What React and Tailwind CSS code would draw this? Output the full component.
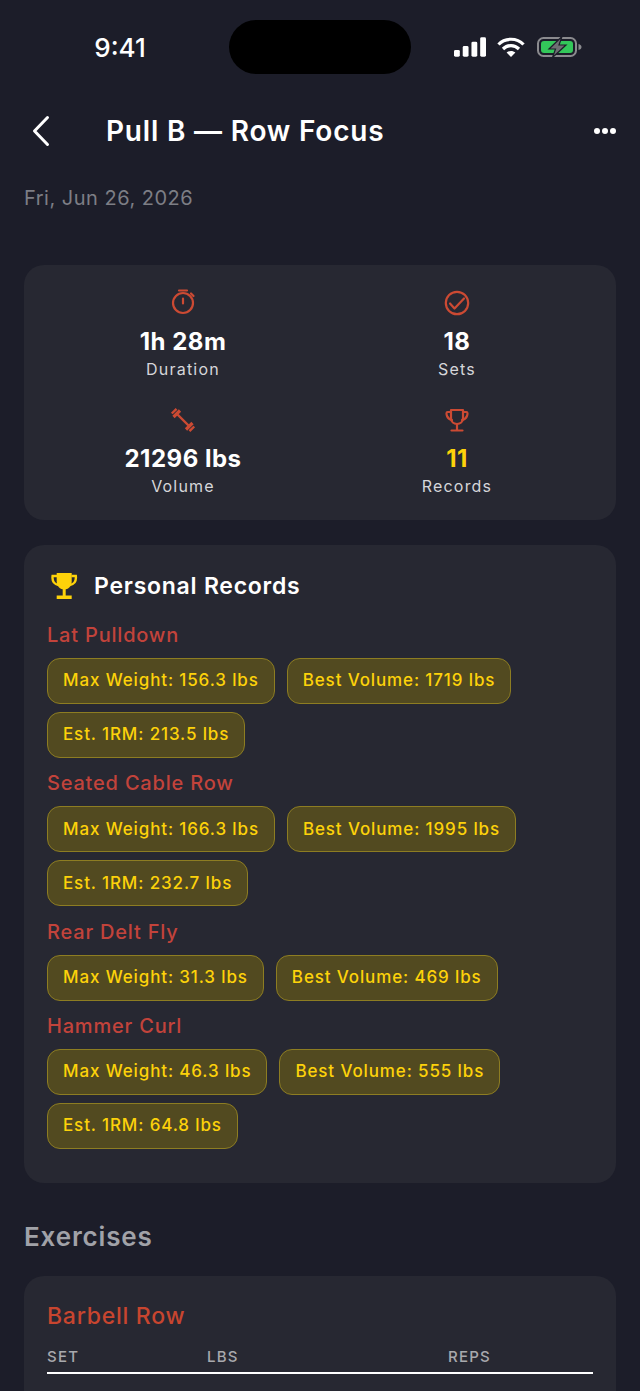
import React from 'react';

const summary = [
  { id: 'duration', icon: 'timer', value: '1h 28m', label: 'Duration' },
  { id: 'sets', icon: 'check', value: '18', label: 'Sets' },
  { id: 'volume', icon: 'barbell', value: '21296 lbs', label: 'Volume' },
  { id: 'records', icon: 'trophy', value: '11', label: 'Records', gold: true },
];

const records = [
  { name: 'Lat Pulldown', items: ['Max Weight: 156.3 lbs', 'Best Volume: 1719 lbs', 'Est. 1RM: 213.5 lbs'] },
  { name: 'Seated Cable Row', items: ['Max Weight: 166.3 lbs', 'Best Volume: 1995 lbs', 'Est. 1RM: 232.7 lbs'] },
  { name: 'Rear Delt Fly', items: ['Max Weight: 31.3 lbs', 'Best Volume: 469 lbs'] },
  { name: 'Hammer Curl', items: ['Max Weight: 46.3 lbs', 'Best Volume: 555 lbs', 'Est. 1RM: 64.8 lbs'] },
];

function SummaryIcon({ type }) {
  const common = { width: 30, height: 30, viewBox: '0 0 30 30', fill: 'none', stroke: '#cc4a33', strokeWidth: 2.2 };
  if (type === 'timer') {
    return (
      <svg {...common}>
        <circle cx="15" cy="15" r="10" />
        <path d="M11 2.5 H19 M15 10.5 V15.5 M23 5.5 L25.5 8" strokeLinecap="round" />
      </svg>
    );
  }
  if (type === 'check') {
    return (
      <svg {...common}>
        <circle cx="15" cy="15" r="11.2" />
        <path d="M8 15.5 L12.5 20.5 L22 10.5" strokeLinecap="round" strokeLinejoin="round" />
      </svg>
    );
  }
  if (type === 'barbell') {
    return (
      <svg {...common}>
        <path d="M9 9 L21 21" strokeWidth="2.4" />
        <path d="M5.5 12 L12 5.5 M18 24.5 L24.5 18" strokeWidth="3.2" />
        <path d="M3.8 8.5 L8.5 3.8 M21.5 26.2 L26.2 21.5" strokeWidth="2.4" />
      </svg>
    );
  }
  return (
    <svg {...common} strokeLinecap="round" strokeLinejoin="round">
      <path d="M9 5 H21 V13 C21 17 18 19 15 19 C12 19 9 17 9 13 Z" />
      <path d="M9 7 H5.5 C4.2 7 4.3 9 5 11 C6 13.5 8 14.5 10 15 M21 7 H24.5 C25.8 7 25.7 9 25 11 C24 13.5 22 14.5 20 15" />
      <path d="M15 19 V25.5 M9.5 25.5 H20.5" />
    </svg>
  );
}

function GoldTrophy() {
  return (
    <svg width="28" height="28" viewBox="0 0 28 28" fill="none">
      <path d="M6.7 1 H21.7 V9.5 C21.7 14 18.3 17.5 14.2 17.5 C10 17.5 6.7 14 6.7 9.5 Z" fill="#fdd20a" />
      <path d="M7 4 H2.6 C2 9 4 12.2 8.5 13 M21.4 4 H25.8 C26.4 9 24.4 12.2 19.9 13" stroke="#fdd20a" strokeWidth="2.4" />
      <path d="M12.7 17 H15.7 V24 H12.7 Z" fill="#fdd20a" />
      <path d="M6.7 23.5 H21.7 V27 H6.7 Z" fill="#fdd20a" />
    </svg>
  );
}

function StatusBar() {
  return (
    <div className="h-[94px] pt-5 flex items-start">
      <div className="w-[229px] h-[54px] flex items-center justify-center pl-[11px] text-[26px] font-medium text-white">9:41</div>
      <div className="w-[182px] h-[54px] rounded-[27px] bg-black" />
      <div className="flex-1 h-[54px] flex items-center pl-[43px] gap-[11px]">
        <svg width="32" height="20" viewBox="0 0 33 20" fill="white">
          <rect x="0" y="13" width="6" height="7" rx="1.5" />
          <rect x="9" y="9" width="6" height="11" rx="1.5" />
          <rect x="18" y="4.5" width="6" height="15.5" rx="1.5" />
          <rect x="27" y="0" width="6" height="20" rx="1.5" />
        </svg>
        <svg width="28" height="20" viewBox="0 0 28 20" fill="none" stroke="white" strokeWidth="3.2">
          <path d="M1.5 7.5 C8 0.5 20 0.5 26.5 7.5" />
          <path d="M6 12 C10.5 7.5 17.5 7.5 22 12" />
          <path d="M14 20 L9.6 15.6 C12 13.4 16 13.4 18.4 15.6 Z" fill="white" stroke="none" />
        </svg>
        <svg width="45" height="22" viewBox="0 0 45 22" fill="none" className="ml-[1px]">
          <rect x="1" y="2" width="38" height="18" rx="5.5" stroke="#8a8a8e" strokeWidth="2" />
          <rect x="4" y="5" width="32" height="12" rx="3" fill="#33c75a" />
          <path d="M41.5 8 C43.5 8.5 44.5 9.5 44.5 11 C44.5 12.5 43.5 13.5 41.5 14 Z" fill="#8a8a8e" />
          <path d="M25 0.5 L12 13 H18.5 L15.5 21.5 L29 9 H22 Z" fill="#6e6e73" stroke="#1c1d29" strokeWidth="1.2" />
        </svg>
      </div>
    </div>
  );
}

export default function App() {
  return (
    <div className="w-[640px] h-[1391px] overflow-hidden bg-[#1c1d29] font-['Inter',sans-serif]">
      <StatusBar />

      {/* Header */}
      <div className="h-[74px] px-6 flex items-center">
        <svg width="38" height="38" viewBox="0 0 38 38" fill="none" stroke="white" strokeWidth="3" strokeLinecap="round" strokeLinejoin="round" className="shrink-0">
          <path d="M23.5 5.5 L10.5 19 L23.5 32.5" />
        </svg>
        <div className="ml-[44px] flex-1 text-[28px] leading-none font-semibold tracking-[0.8px] text-white">Pull B — Row Focus</div>
        <div className="flex gap-[2px]">
          <span className="w-[6px] h-[6px] rounded-full bg-white" />
          <span className="w-[6px] h-[6px] rounded-full bg-white" />
          <span className="w-[6px] h-[6px] rounded-full bg-white" />
        </div>
      </div>

      <div className="px-6">
        <div className="mt-[15px] text-[20px] leading-[30px] tracking-[0.5px] text-[#7d7e85]">Fri, Jun 26, 2026</div>

        {/* Summary */}
        <div className="mt-[52px] h-[255px] rounded-[20px] bg-[#272832] grid grid-cols-2 pt-[23px] px-[22px]">
          {summary.map((s) => (
            <div key={s.id} className="h-[116.5px] flex flex-col items-center">
              <div className="h-[30px] flex items-center"><SummaryIcon type={s.icon} /></div>
              <div className={`mt-[8px] text-[24px] leading-[32px] font-bold tracking-[0.5px] ${s.gold ? 'text-[#fdd20a]' : 'text-white'}`}>{s.value}</div>
              <div className="-mt-[1px] text-[16px] leading-[24px] tracking-[1.2px] text-[#d6d6da]">{s.label}</div>
            </div>
          ))}
        </div>

        {/* Personal records */}
        <div className="mt-[25px] h-[638px] rounded-[20px] bg-[#272832] pt-[24px] px-[23px]">
          <div className="flex items-center h-[34px]">
            <div className="pl-[3px] flex items-center"><GoldTrophy /></div>
            <div className="ml-[16px] text-[23px] font-semibold tracking-[0.75px] text-white">Personal Records</div>
          </div>
          <div className="mt-[18px] flex flex-col gap-[11.3px]">
            {records.map((r) => (
              <div key={r.name}>
                <div className="h-[28px] flex items-center text-[20px] font-medium tracking-[0.8px] text-[#c2433b]">{r.name}</div>
                <div className="mt-[9px] flex flex-wrap gap-x-3 gap-y-[8px]">
                  {r.items.map((item) => (
                    <div key={item} className="h-[46px] px-[15px] flex items-center rounded-[13px] border-[1.5px] border-[#8d7d22] bg-[#524a20] text-[17px] font-medium tracking-[0.87px] text-[#fdd20a]">{item}</div>
                  ))}
                </div>
              </div>
            ))}
          </div>
        </div>

        <div className="mt-[35px] h-[36px] flex items-center text-[26px] font-semibold tracking-[0.85px] text-[#a1a2a8]">Exercises</div>

        {/* Exercise card */}
        <div className="mt-[22px] rounded-t-[20px] bg-[#272832] h-[200px] pt-[24px] px-[23px]">
          <div className="h-[32px] flex items-center text-[23px] font-medium tracking-[0.75px] text-[#c8452f]">Barbell Row</div>
          <div className="mt-[10px] flex h-[30px] items-center text-[15px] font-medium tracking-[1.2px] text-[#a8a9ad] border-b-2 border-white box-content">
            <div className="w-[160px]">SET</div>
            <div className="w-[241px]">LBS</div>
            <div>REPS</div>
          </div>
        </div>
      </div>
    </div>
  );
}
